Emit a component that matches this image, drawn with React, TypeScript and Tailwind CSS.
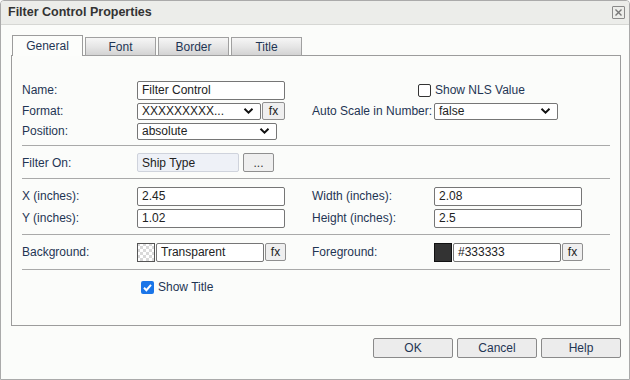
import React from "react";

const Chevron = () => (
  <svg width="11" height="8" viewBox="0 0 11 8" className="shrink-0">
    <path d="M1.5 1.8 L5.5 5.6 L9.5 1.8" fill="none" stroke="#111" strokeWidth="2" />
  </svg>
);

const Select = ({ value, w }: { value: string; w: string }) => (
  <div
    className={`${w} h-[17px] flex items-center justify-between pl-[4px] pr-[6px] border border-[#767676] rounded-[2px] bg-white text-[#222]`}
  >
    <span className="leading-none">{value}</span>
    <Chevron />
  </div>
);

const Input = ({ value, w }: { value: string; w: string }) => (
  <div
    className={`${w} h-[19px] flex items-center pl-[4px] border border-[#767676] rounded-[2px] bg-white text-[#222]`}
  >
    <span className="leading-none">{value}</span>
  </div>
);

const Fx = ({ w }: { w: string }) => (
  <div
    className={`${w} h-[18px] flex items-center justify-center border border-[#8f8f8f] rounded-[2px] bg-[#efefef] text-[#222] text-[12px]`}
  >
    fx
  </div>
);

const Checkbox = ({ checked }: { checked?: boolean }) =>
  checked ? (
    <div className="w-[13px] h-[13px] rounded-[2px] bg-[#1a75e8] flex items-center justify-center">
      <svg width="11" height="11" viewBox="0 0 11 11">
        <path d="M2 5.8 L4.4 8.2 L9 2.8" fill="none" stroke="white" strokeWidth="2" />
      </svg>
    </div>
  ) : (
    <div className="w-[13px] h-[13px] rounded-[2px] border border-[#333] bg-white" />
  );

const Sep = () => <div className="ml-[10px] w-[588px] h-px bg-[#a9a9a9]" />;

const Checker = () => (
  <svg width="18" height="19" className="shrink-0">
    <defs>
      <pattern id="chk" width="6" height="6" patternUnits="userSpaceOnUse">
        <rect width="6" height="6" fill="#fff" />
        <rect width="3" height="3" fill="#d9d9d9" />
        <rect x="3" y="3" width="3" height="3" fill="#d9d9d9" />
      </pattern>
    </defs>
    <rect x="0.5" y="0.5" width="17" height="18" fill="url(#chk)" stroke="#555" />
  </svg>
);

const tabs = ["General", "Font", "Border", "Title"];

export default function App() {
  return (
    <div className="w-[630px] h-[380px] bg-[#fbfcfa] border border-[#aaaaaa] rounded-t-[4px] flex flex-col overflow-hidden font-['Liberation_Sans',Arial,sans-serif] text-[12px] text-[#1f3554]">
      {/* title bar */}
      <div className="h-[24px] shrink-0 flex items-center justify-between pl-[7px] pr-[4px] bg-[#ecedea] border-b border-[#d6d7d4]">
        <span className="font-bold text-[12.5px] text-[#333]">Filter Control Properties</span>
        <div className="w-[13px] h-[13px] border border-[#8a8a8a] rounded-[1px] flex items-center justify-center">
          <svg width="9" height="9" viewBox="0 0 9 9">
            <path d="M1.5 1.5 L7.5 7.5 M7.5 1.5 L1.5 7.5" stroke="#777" strokeWidth="1.4" />
          </svg>
        </div>
      </div>

      <div className="pl-[10px] pt-[10px]">
        {/* tabs */}
        <div className="flex items-end gap-[2px] ml-[1px] h-[21px] relative z-10 -mb-px">
          {tabs.map((t, i) =>
            i === 0 ? (
              <div
                key={t}
                className="w-[71px] h-[21px] flex items-center justify-center border border-b-0 border-[#9c9c9c] bg-[#fcfdfb] text-[#1f3554]"
              >
                {t}
              </div>
            ) : (
              <div
                key={t}
                className="w-[71px] h-[19px] flex items-center justify-center border border-[#a0a0a0] bg-gradient-to-b from-[#f6f6f6] via-[#e6e6e6] to-[#d3d3d3] text-[#1f3554]"
              >
                {t}
              </div>
            )
          )}
        </div>

        {/* panel */}
        <div className="w-[610px] h-[271px] border border-[#9c9c9c] flex flex-col">
          {/* section 1 */}
          <div className="pl-[10px] pt-[23px] pb-[4px] flex flex-col">
            <div className="flex items-center h-[22px]">
              <span className="w-[115px]">Name:</span>
              <div className="w-[281px]">
                <Input value="Filter Control" w="w-[148px]" />
              </div>
              <div className="flex items-center gap-[4px]">
                <Checkbox />
                <span>Show NLS Value</span>
              </div>
            </div>
            <div className="flex items-center h-[20px]">
              <span className="w-[115px]">Format:</span>
              <div className="w-[175px] flex items-center gap-[1px]">
                <Select value="XXXXXXXXX..." w="w-[124px]" />
                <Fx w="w-[23px]" />
              </div>
              <span className="w-[122px]">Auto Scale in Number:</span>
              <Select value="false" w="w-[124px]" />
            </div>
            <div className="flex items-center h-[20px]">
              <span className="w-[115px]">Position:</span>
              <Select value="absolute" w="w-[140px]" />
            </div>
          </div>
          <Sep />

          {/* section 2 */}
          <div className="pl-[10px] pt-[7px] pb-[6px]">
            <div className="flex items-center h-[19px]">
              <span className="w-[115px]">Filter On:</span>
              <div className="w-[102px] h-[19px] flex items-center pl-[4px] border border-[#cfd3dc] rounded-[2px] bg-[#eef1f7] text-[#222]">
                Ship Type
              </div>
              <div className="ml-[4px] w-[31px] h-[19px] flex items-end justify-center border border-[#8f8f8f] rounded-[2px] bg-[#efefef] text-[#333] pb-[2px] leading-none">
                ...
              </div>
            </div>
          </div>
          <Sep />

          {/* section 3 */}
          <div className="pl-[10px] pt-[6px] pb-[5px] flex flex-col">
            <div className="flex items-center h-[22px]">
              <span className="w-[115px]">X (inches):</span>
              <div className="w-[175px]">
                <Input value="2.45" w="w-[148px]" />
              </div>
              <span className="w-[122px]">Width (inches):</span>
              <Input value="2.08" w="w-[148px]" />
            </div>
            <div className="flex items-center h-[22px]">
              <span className="w-[115px]">Y (inches):</span>
              <div className="w-[175px]">
                <Input value="1.02" w="w-[148px]" />
              </div>
              <span className="w-[122px]">Height (inches):</span>
              <Input value="2.5" w="w-[148px]" />
            </div>
          </div>
          <Sep />

          {/* section 4 */}
          <div className="pl-[10px] py-[7px]">
            <div className="flex items-center h-[20px]">
              <span className="w-[115px]">Background:</span>
              <div className="w-[175px] flex items-center">
                <Checker />
                <div className="ml-[1px]">
                  <Input value="Transparent" w="w-[108px]" />
                </div>
                <div className="ml-[1px]">
                  <Fx w="w-[21px]" />
                </div>
              </div>
              <span className="w-[122px]">Foreground:</span>
              <div className="flex items-center">
                <div className="w-[18px] h-[19px] bg-[#333333] border border-[#111]" />
                <div className="ml-[1px]">
                  <Input value="#333333" w="w-[108px]" />
                </div>
                <div className="ml-[1px]">
                  <Fx w="w-[21px]" />
                </div>
              </div>
            </div>
          </div>
          <Sep />

          {/* section 5 */}
          <div className="pl-[129px] pt-[8px] flex items-center gap-[4px]">
            <Checkbox checked />
            <span>Show Title</span>
          </div>
        </div>

        {/* buttons */}
        <div className="w-[610px] flex justify-end gap-[4px] mt-[12px]">
          {["OK", "Cancel", "Help"].map((b) => (
            <div
              key={b}
              className="w-[80px] h-[20px] flex items-center justify-center border border-[#8a8a8a] rounded-[2px] bg-[#ececec] text-[#1f3554]"
            >
              {b}
            </div>
          ))}
        </div>
      </div>
    </div>
  );
}
